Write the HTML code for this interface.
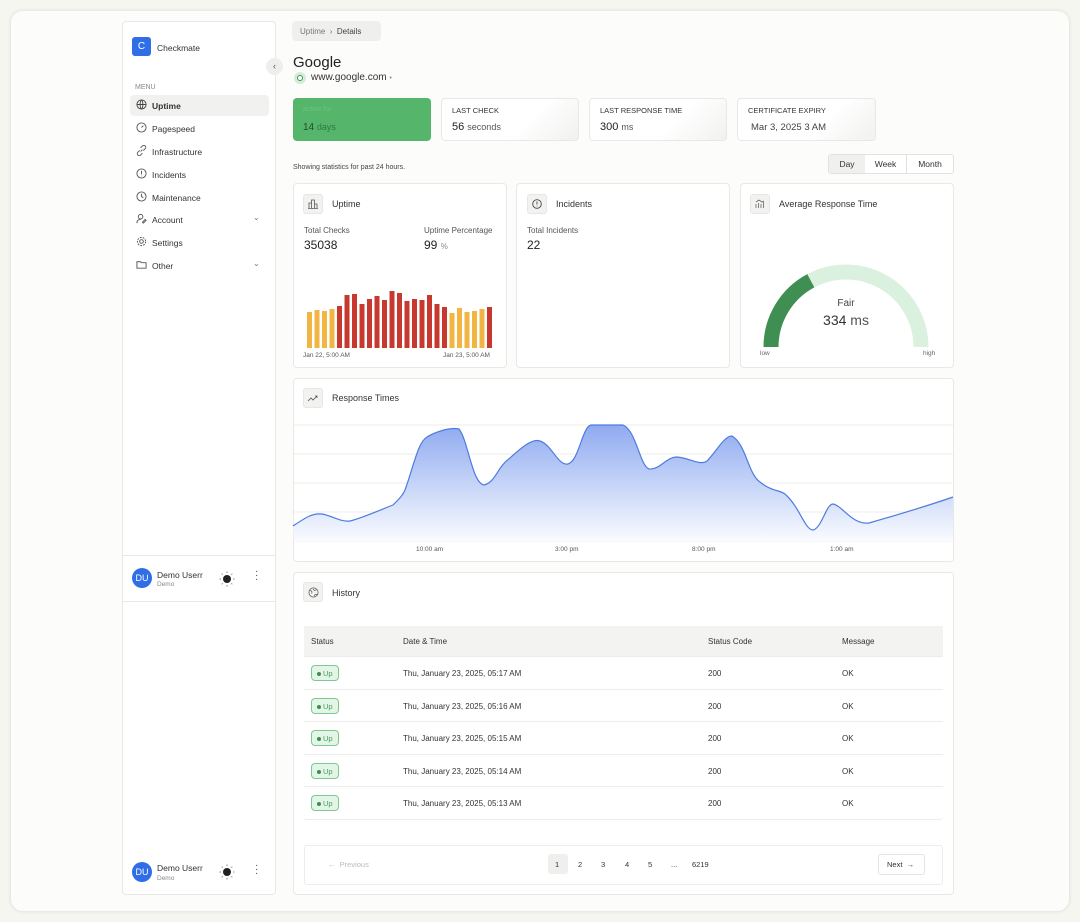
<!DOCTYPE html>
<html><head><meta charset="utf-8"><style>
*{box-sizing:border-box;margin:0;padding:0}
body{width:1080px;height:922px;background:#f6f6f1;font-family:"Liberation Sans",sans-serif;color:#222;position:relative;overflow:hidden}
.a{position:absolute}
.frame{left:11px;top:11px;width:1058px;height:900px;background:#fcfcfb;border-radius:12px;box-shadow:0 0 4px rgba(0,0,0,.12)}
.card{position:absolute;background:#fff;border:1px solid #e8e8e6;border-radius:4px}
.t9{font-size:9px;color:#444}
.t8{font-size:8px;color:#555}
.ico{position:absolute;width:20px;height:20px;background:#f2f2f1;border:1px solid #e6e6e4;border-radius:3px}
.nav{position:absolute;left:136px;font-size:8.5px;color:#333}
.nav svg{position:absolute;left:0;top:-2px}
.nav span{position:absolute;left:16px;top:0;white-space:nowrap}
.row{position:absolute;left:304px;width:639px;height:33px;border-top:1px solid #ececea;background:#fff;font-size:8px;color:#333}
.row div{position:absolute;top:12px}
.badge{position:absolute;left:7px;top:8px !important;width:28px;height:16px;border:1px solid #7fc990;background:#e3f5e7;border-radius:4px;font-size:7.5px;color:#4a9a5c;padding:3px 0 0 11px}
.badge:before{content:"";position:absolute;left:5px;top:6px;width:4px;height:4px;border-radius:50%;background:#3c8f50}
.sc{background:linear-gradient(135deg,#fff 60%,#f1f1f0)}
</style></head><body>
<div class="a frame"></div>

<!-- sidebar -->
<div class="card" style="left:122px;top:21px;width:154px;height:874px;border-radius:4px"></div>
<div class="a" style="left:132px;top:37px;width:19px;height:19px;background:#2f6ee6;border-radius:3px;color:#fff;font-size:10px;text-align:center;line-height:19px">C</div>
<div class="a" style="left:157px;top:43px;font-size:8.5px;color:#333">Checkmate</div>
<div class="a" style="left:266px;top:58px;width:17px;height:17px;border-radius:50%;background:#eee;font-size:9px;color:#555;text-align:center;line-height:16px">‹</div>
<div class="a" style="left:135px;top:84px;font-size:7px;color:#888">MENU</div>
<div class="a" style="left:130px;top:95px;width:139px;height:21px;background:#f1f1ef;border-radius:4px"></div>
<div class="nav" style="top:101px"><svg width="11" height="11" viewBox="0 0 12 12" fill="none" stroke="#444" stroke-width="1"><circle cx="6" cy="6" r="5"/><path d="M1 6h10M6 1c2 2 2 8 0 10M6 1c-2 2-2 8 0 10"/></svg><span style="font-weight:bold">Uptime</span></div>
<div class="nav" style="top:124px"><svg width="11" height="11" viewBox="0 0 12 12" fill="none" stroke="#555"><circle cx="6" cy="6" r="5"/><path d="M6 6l2-2"/></svg><span>Pagespeed</span></div>
<div class="nav" style="top:147px"><svg width="11" height="11" viewBox="0 0 12 12" fill="none" stroke="#555"><path d="M5 7l2-2M4 6L2 8a2 2 0 003 3l2-2M8 6l2-2a2 2 0 00-3-3L5 3"/></svg><span>Infrastructure</span></div>
<div class="nav" style="top:170px"><svg width="11" height="11" viewBox="0 0 12 12" fill="none" stroke="#555"><circle cx="6" cy="6" r="5"/><path d="M6 3v4M6 8.5v.5"/></svg><span>Incidents</span></div>
<div class="nav" style="top:193px"><svg width="11" height="11" viewBox="0 0 12 12" fill="none" stroke="#555"><circle cx="6" cy="6" r="5"/><path d="M6 3v3l2 1.5"/></svg><span>Maintenance</span></div>
<div class="nav" style="top:215px"><svg width="11" height="11" viewBox="0 0 12 12" fill="none" stroke="#555"><circle cx="5" cy="4" r="2.5"/><path d="M1 11c0-3 2-4 4-4M7 10l3-3 1 1-3 3z"/></svg><span>Account</span></div>
<div class="nav" style="top:238px"><svg width="11" height="11" viewBox="0 0 12 12" fill="none" stroke="#555"><circle cx="6" cy="6" r="2"/><circle cx="6" cy="6" r="4.5" stroke-dasharray="2 1.2"/></svg><span>Settings</span></div>
<div class="nav" style="top:261px"><svg width="11" height="11" viewBox="0 0 12 12" fill="none" stroke="#555"><path d="M1 3h4l1 1h5v6H1z"/></svg><span>Other</span></div>
<div class="a" style="left:253px;top:213px;font-size:8px;color:#777">⌄</div>
<div class="a" style="left:253px;top:259px;font-size:8px;color:#777">⌄</div>

<div class="a" style="left:122px;top:555px;width:154px;height:1px;background:#e8e8e6"></div>
<div class="a" style="left:122px;top:601px;width:154px;height:1px;background:#e8e8e6"></div>
<div class="a" style="left:132px;top:568px;width:20px;height:20px;border-radius:50%;background:#2f6ee6;color:#fff;font-size:9px;text-align:center;line-height:20px">DU</div>
<div class="a" style="left:157px;top:570px;font-size:8.5px;color:#333">Demo Userr</div>
<div class="a" style="left:157px;top:581px;font-size:6.5px;color:#888">Demo</div>
<svg class="a" style="left:219px;top:571px" width="16" height="16" viewBox="0 0 16 16"><circle cx="8" cy="8" r="4" fill="#222"/><g stroke="#888" stroke-width="1"><path d="M8 0.5v1.5M8 14v1.5M0.5 8h1.5M14 8h1.5M2.7 2.7l1 1M12.3 12.3l1 1M2.7 13.3l1-1M12.3 3.7l1-1"/></g></svg>
<div class="a" style="left:255px;top:570px;font-size:10px;color:#444;line-height:4px">·<br>·<br>·</div>

<div class="a" style="left:132px;top:862px;width:20px;height:20px;border-radius:50%;background:#2f6ee6;color:#fff;font-size:9px;text-align:center;line-height:20px">DU</div>
<div class="a" style="left:157px;top:863px;font-size:8.5px;color:#333">Demo Userr</div>
<div class="a" style="left:157px;top:875px;font-size:6.5px;color:#888">Demo</div>
<svg class="a" style="left:219px;top:864px" width="16" height="16" viewBox="0 0 16 16"><circle cx="8" cy="8" r="4" fill="#222"/><g stroke="#888" stroke-width="1"><path d="M8 0.5v1.5M8 14v1.5M0.5 8h1.5M14 8h1.5M2.7 2.7l1 1M12.3 12.3l1 1M2.7 13.3l1-1M12.3 3.7l1-1"/></g></svg>
<div class="a" style="left:255px;top:864px;font-size:10px;color:#444;line-height:4px">·<br>·<br>·</div>

<!-- breadcrumb -->
<div class="a" style="left:292px;top:21px;width:89px;height:20px;background:#efefed;border-radius:4px;font-size:8px;color:#777;padding:6px 0 0 8px">Uptime &nbsp;›&nbsp; <span style="color:#444">Details</span></div>
<div class="a" style="left:293px;top:54px;font-size:15px;color:#222">Google</div>
<div class="a" style="left:294px;top:72px;width:12px;height:12px;border-radius:50%;background:#d4ecd9"></div>
<div class="a" style="left:297px;top:75px;width:6px;height:6px;border-radius:50%;border:1.5px solid #3a9a50;background:#fff"></div>
<div class="a" style="left:311px;top:72px;font-size:10px;color:#333">www.google.com <span style="font-size:7px;color:#888">•</span></div>

<!-- stat cards -->
<div class="a" style="left:293px;top:98px;width:138px;height:43px;background:#55b56a;border-radius:4px"></div>
<div class="a" style="left:303px;top:106px;font-size:7px;color:#6cc47f">active for</div>
<div class="a" style="left:303px;top:122px;font-size:10px;color:#1e4d28">14 <span style="font-size:9px;color:#2f7a42">days</span></div>
<div class="card sc" style="left:441px;top:98px;width:138px;height:43px"></div>
<div class="a" style="left:452px;top:106px;font-size:7.5px;color:#333">LAST CHECK</div>
<div class="a" style="left:452px;top:121px;font-size:11px;color:#222">56 <span style="font-size:9px;color:#555">seconds</span></div>
<div class="card sc" style="left:589px;top:98px;width:138px;height:43px"></div>
<div class="a" style="left:600px;top:106px;font-size:7.5px;color:#333">LAST RESPONSE TIME</div>
<div class="a" style="left:600px;top:121px;font-size:11px;color:#222">300 <span style="font-size:9px;color:#555">ms</span></div>
<div class="card sc" style="left:737px;top:98px;width:139px;height:43px"></div>
<div class="a" style="left:748px;top:106px;font-size:7.5px;color:#333">CERTIFICATE EXPIRY</div>
<div class="a" style="left:751px;top:122px;font-size:9.5px;color:#444">Mar 3, 2025 3 AM</div>

<div class="a" style="left:293px;top:164px;font-size:7px;color:#444">Showing statistics for past 24 hours.</div>
<div class="a" style="left:828px;top:154px;width:126px;height:20px;border:1px solid #e2e2e0;border-radius:3px;background:#fff;font-size:8.5px;color:#333">
<div class="a" style="left:0;top:0;width:36px;height:18px;background:#f0f0ee;text-align:center;line-height:18px">Day</div>
<div class="a" style="left:36px;top:0;width:42px;height:18px;border-right:1px solid #e2e2e0;text-align:center;line-height:18px">Week</div>
<div class="a" style="left:78px;top:0;width:46px;height:18px;text-align:center;line-height:18px">Month</div>
</div>

<!-- cards row -->
<div class="card" style="left:293px;top:183px;width:214px;height:185px"></div>
<div class="ico" style="left:303px;top:194px"></div>
<svg class="a" style="left:308px;top:199px" width="10" height="10" viewBox="0 0 10 10" fill="none" stroke="#555" stroke-width=".8"><path d="M1 9V4h2.5v5M3.5 9V1h3v8M6.5 9V5H9v4M0 9.5h10"/></svg>
<div class="a" style="left:332px;top:199px;font-size:9px;color:#333">Uptime</div>
<div class="a t8" style="left:304px;top:226px">Total Checks</div>
<div class="a" style="left:304px;top:238px;font-size:12px;color:#222">35038</div>
<div class="a t8" style="left:424px;top:226px">Uptime Percentage</div>
<div class="a" style="left:424px;top:238px;font-size:12px;color:#222">99 <span style="font-size:8px;color:#888">%</span></div>
<svg class="a" style="left:0;top:0" width="1080" height="922">
<g id="bars"></g>
</svg>
<div class="a" style="left:303px;top:352px;font-size:6.5px;color:#555">Jan 22, 5:00 AM</div>
<div class="a" style="left:443px;top:352px;font-size:6.5px;color:#555">Jan 23, 5:00 AM</div>

<div class="card" style="left:516px;top:183px;width:214px;height:185px"></div>
<div class="ico" style="left:527px;top:194px"></div>
<svg class="a" style="left:532px;top:199px" width="10" height="10" viewBox="0 0 10 10" fill="none" stroke="#444" stroke-width=".9"><circle cx="5" cy="5" r="4.3"/><path d="M5 2.5v3M5 6.8v.6"/></svg>
<div class="a" style="left:556px;top:199px;font-size:9px;color:#333">Incidents</div>
<div class="a t8" style="left:527px;top:226px">Total Incidents</div>
<div class="a" style="left:527px;top:238px;font-size:12px;color:#222">22</div>

<div class="card" style="left:740px;top:183px;width:214px;height:185px"></div>
<div class="ico" style="left:750px;top:194px"></div>
<svg class="a" style="left:755px;top:199px" width="10" height="10" viewBox="0 0 10 10" fill="none" stroke="#666" stroke-width=".8"><path d="M1 9V5M3.5 9V4M6 9V5M8.5 9V3M1 3l3-2 3 2 2-1"/></svg>
<div class="a" style="left:779px;top:199px;font-size:9px;color:#333">Average Response Time</div>
<svg class="a" style="left:0;top:0" width="1080" height="922">
<path d="M771 347 A75 75 0 0 1 921 347" fill="none" stroke="#d9f1de" stroke-width="15"/>
<path d="M771 347 A75 75 0 0 1 810.8 280.8" fill="none" stroke="#3f8f52" stroke-width="15"/>
</svg>
<div class="a" style="left:826px;top:298px;width:40px;text-align:center;font-size:10px;color:#444">Fair</div>
<div class="a" style="left:806px;top:312px;width:80px;text-align:center;font-size:14px;color:#333">334 <span style="color:#555">ms</span></div>
<div class="a" style="left:760px;top:350px;font-size:6.5px;color:#666">low</div>
<div class="a" style="left:923px;top:350px;font-size:6.5px;color:#666">high</div>

<!-- response times -->
<div class="card" style="left:293px;top:378px;width:661px;height:184px"></div>
<div class="ico" style="left:303px;top:388px"></div>
<svg class="a" style="left:307px;top:393px" width="12" height="10" viewBox="0 0 12 10" fill="none" stroke="#555" stroke-width=".8"><path d="M1 8l3-3 2 2 4-4M8 3h2v2"/></svg>
<div class="a" style="left:332px;top:393px;font-size:9px;color:#333">Response Times</div>
<svg class="a" style="left:0;top:0" width="1080" height="922">
<defs><linearGradient id="g" x1="0" y1="0" x2="0" y2="1"><stop offset="0" stop-color="#90aaf0"/><stop offset="0.5" stop-color="#c4d3f7"/><stop offset="1" stop-color="#fafbff"/></linearGradient></defs>
<g stroke="#ececea" stroke-width="1"><path d="M294 425H953M294 454H953M294 483H953M294 512H953M294 541H953"/></g>
<path d="M294 541 L293 526 C305 518 312 513 322 514 C333 516 340 522 350 521 C362 518 380 510 393 505 C400 498 403 495 405 490 C414 465 418 442 427 437 C435 432 450 427 459 429 C468 440 472 483 484 485 C496 482 497 467 510 458 C520 449 532 438 540 441 C552 445 558 466 568 464 C579 461 582 427 591 425 L623 425 C636 430 640 466 649 469 C660 470 666 457 677 457 C690 458 700 466 707 461 C716 452 724 436 732 436 C746 444 748 474 760 482 C772 492 782 490 786 495 C800 508 805 530 813 530 C822 528 826 504 833 504 C843 506 852 525 869 523 C890 517 930 505 953 497 L953 541 Z" fill="url(#g)"/>
<path d="M293 526 C305 518 312 513 322 514 C333 516 340 522 350 521 C362 518 380 510 393 505 C400 498 403 495 405 490 C414 465 418 442 427 437 C435 432 450 427 459 429 C468 440 472 483 484 485 C496 482 497 467 510 458 C520 449 532 438 540 441 C552 445 558 466 568 464 C579 461 582 427 591 425 L623 425 C636 430 640 466 649 469 C660 470 666 457 677 457 C690 458 700 466 707 461 C716 452 724 436 732 436 C746 444 748 474 760 482 C772 492 782 490 786 495 C800 508 805 530 813 530 C822 528 826 504 833 504 C843 506 852 525 869 523 C890 517 930 505 953 497" fill="none" stroke="#4d7ce0" stroke-width="1.2"/>
</svg>
<div class="a" style="left:416px;top:546px;font-size:6.5px;color:#555">10:00 am</div>
<div class="a" style="left:555px;top:546px;font-size:6.5px;color:#555">3:00 pm</div>
<div class="a" style="left:692px;top:546px;font-size:6.5px;color:#555">8:00 pm</div>
<div class="a" style="left:830px;top:546px;font-size:6.5px;color:#555">1:00 am</div>

<!-- history -->
<div class="card" style="left:293px;top:572px;width:661px;height:323px"></div>
<div class="ico" style="left:303px;top:582px"></div>
<svg class="a" style="left:308px;top:587px" width="11" height="11" viewBox="0 0 12 12" fill="none" stroke="#555" stroke-width=".8"><circle cx="6" cy="6" r="5"/><path d="M2 4c2 0 3 1 2 3M7 10c0-2 1-2 3-2M6 2c0 2 2 2 3 1"/></svg>
<div class="a" style="left:332px;top:588px;font-size:9px;color:#333">History</div>
<div class="a" style="left:304px;top:626px;width:639px;height:194px;border:1px solid #ececea;border-radius:3px;background:#fff"></div>
<div class="a" style="left:304px;top:626px;width:639px;height:30px;background:#f3f3f2;font-size:8px;color:#333">
<div class="a" style="left:7px;top:11px">Status</div><div class="a" style="left:99px;top:11px">Date &amp; Time</div><div class="a" style="left:404px;top:11px">Status Code</div><div class="a" style="left:538px;top:11px">Message</div></div>
<div class="row" style="top:656px"><span class="badge">Up</span><div style="left:99px">Thu, January 23, 2025, 05:17 AM</div><div style="left:404px">200</div><div style="left:538px">OK</div></div>
<div class="row" style="top:689px"><span class="badge">Up</span><div style="left:99px">Thu, January 23, 2025, 05:16 AM</div><div style="left:404px">200</div><div style="left:538px">OK</div></div>
<div class="row" style="top:721px"><span class="badge">Up</span><div style="left:99px">Thu, January 23, 2025, 05:15 AM</div><div style="left:404px">200</div><div style="left:538px">OK</div></div>
<div class="row" style="top:754px"><span class="badge">Up</span><div style="left:99px">Thu, January 23, 2025, 05:14 AM</div><div style="left:404px">200</div><div style="left:538px">OK</div></div>
<div class="row" style="top:786px;height:32px"><span class="badge">Up</span><div style="left:99px">Thu, January 23, 2025, 05:13 AM</div><div style="left:404px">200</div><div style="left:538px">OK</div></div>

<div class="a" style="left:304px;top:845px;width:639px;height:40px;border:1px solid #ececea;border-radius:3px;background:#fff"></div>
<div class="a" style="left:328px;top:860px;font-size:7.5px;color:#bbb">←&nbsp; Previous</div>
<div class="a" style="left:548px;top:854px;width:20px;height:20px;background:#efefed;border-radius:3px"></div>
<div class="a" style="left:555px;top:860px;font-size:7.5px;color:#333">1</div>
<div class="a" style="left:578px;top:860px;font-size:7.5px;color:#333">2</div>
<div class="a" style="left:601px;top:860px;font-size:7.5px;color:#333">3</div>
<div class="a" style="left:625px;top:860px;font-size:7.5px;color:#333">4</div>
<div class="a" style="left:648px;top:860px;font-size:7.5px;color:#333">5</div>
<div class="a" style="left:671px;top:860px;font-size:7.5px;color:#333">...</div>
<div class="a" style="left:692px;top:860px;font-size:7.5px;color:#333">6219</div>
<div class="a" style="left:878px;top:854px;width:47px;height:21px;border:1px solid #e4e4e2;border-radius:3px;background:#fff;font-size:7.5px;color:#333;padding:5px 0 0 8px">Next &nbsp;→</div>

<script>
var t=[312,310,311,309,306,295,294,304,299,296,300,291,293,301,299,300,295,304,307,313,308,312,311,309,307];
var s='';
for(var i=0;i<25;i++){var c=(i<4||(i>18&&i<24))?'#f0b542':'#c7382e';s+='<rect x="'+(307+i*7.5)+'" y="'+t[i]+'" width="5" height="'+(348-t[i])+'" fill="'+c+'"/>';}
document.getElementById('bars').innerHTML=s;
</script>
</body></html>
